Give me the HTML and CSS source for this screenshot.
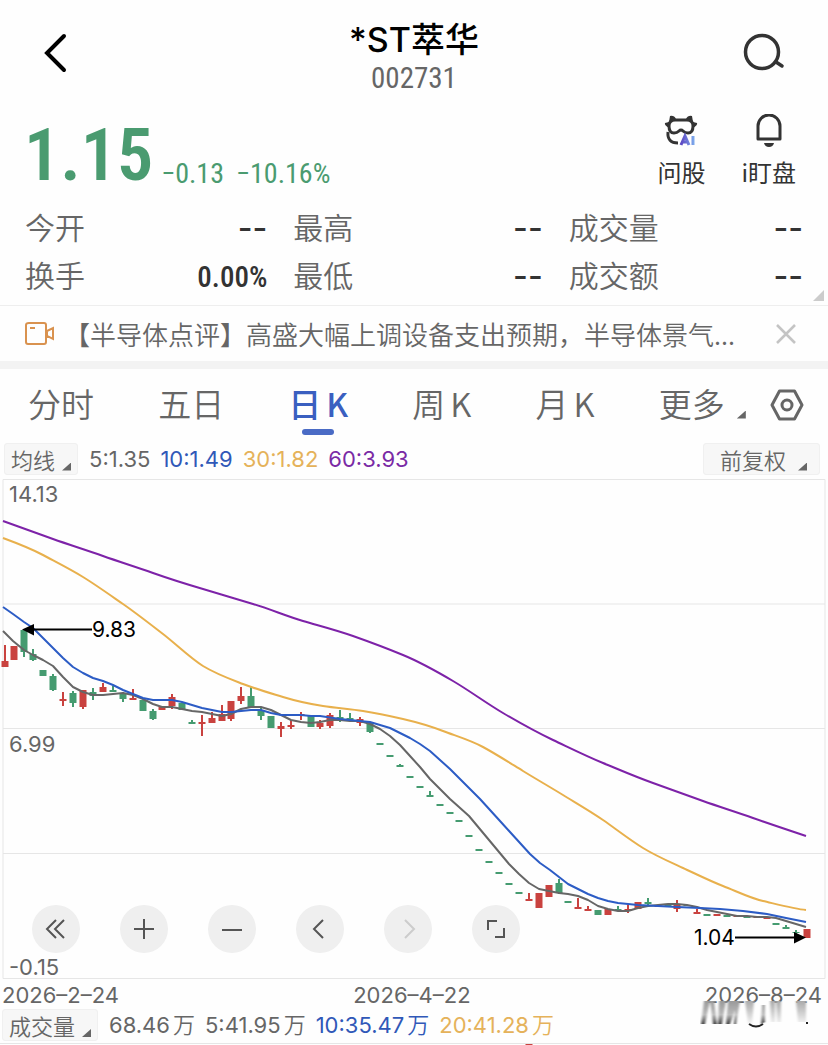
FILE: index.html
```html
<!DOCTYPE html>
<html lang="zh-CN">
<head>
  <meta charset="UTF-8">
  <meta name="viewport" content="width=device-width, initial-scale=1.0">
  <title>*ST萃华 002731</title>
  <link rel="stylesheet" href="styles.css">
</head>
<body>
  <header class="header">
    <button class="icon-btn" aria-label="返回">
      <svg width="28" height="44" viewBox="0 0 28 44"><path class="back-line" d="M22 5 L5 22 L22 39"/></svg>
    </button>
    <div class="title">
      <h1>*ST萃华</h1>
      <p class="code">002731</p>
    </div>
    <button class="icon-btn" aria-label="搜索">
      <svg width="44" height="44" viewBox="0 0 44 44"><circle class="search-line" cx="20" cy="21" r="16.5"/><path class="search-line" d="M34 31 L40 35"/></svg>
    </button>
  </header>

  <section class="quote">
    <p class="price">1.15</p>
    <p class="change"><span>−0.13</span><span>−10.16%</span></p>
    <div class="actions">
      <button class="action">
        <svg width="34" height="34" viewBox="0 0 34 34">
          <defs>
            <linearGradient id="ai" gradientUnits="userSpaceOnUse" x1="16" y1="0" x2="31" y2="0"><stop offset="0" stop-color="#5a3fc0"/><stop offset="1" stop-color="#7fb0ee"/></linearGradient>
          </defs>
          <path class="dark-fill" d="M5 8 L6 2 Q10 1 12 5 H22 Q24 1 28 2 L29 8 L33 9 Q34 11 29 14 H5 Q0 11 1 9 Z"/>
          <path class="goggles" d="M11 6 H23 Q29 6 29 12 Q29 19 24 19 Q21 19 19 17 Q17 15 15 17 Q13 19 10 19 Q5 19 5 12 Q5 6 11 6 Z"/>
          <path class="dark-line" d="M4 18 Q3 29 14 29"/>
          <path class="ai-line" d="M17 31 L21 22 L25 31 M19 28 H24 M29 22 V31"/>
        </svg>
        <span>问股</span>
      </button>
      <button class="action">
        <svg width="34" height="34" viewBox="0 0 34 34"><path class="dark-line" d="M6 25 V12 A11 11 0 0 1 28 12 V25 Z"/><path class="dark-fill" d="M12 29 H22 Q21 33 17 33 Q13 33 12 29 Z"/></svg>
        <span>i盯盘</span>
      </button>
    </div>
  </section>

  <section class="stats">
    <dl class="stat"><dt>今开</dt><dd class="empty">--</dd></dl>
    <dl class="stat"><dt>最高</dt><dd class="empty">--</dd></dl>
    <dl class="stat"><dt>成交量</dt><dd class="empty">--</dd></dl>
    <dl class="stat"><dt>换手</dt><dd>0.00%</dd></dl>
    <dl class="stat"><dt>最低</dt><dd class="empty">--</dd></dl>
    <dl class="stat"><dt>成交额</dt><dd class="empty">--</dd></dl>
    <span class="corner corner-expand"></span>
  </section>

  <section class="news">
    <svg width="30" height="24" viewBox="0 0 30 24"><path class="video-line" d="M4 1 H19 Q21 1 21 3 V20 Q21 22 19 22 H3 Q1 22 1 20 V3 Q1 1 4 1 Z M5 6 H10 M22 9 L28 6 V17 L22 14 Z"/></svg>
    <a class="news-text" href="#">【半导体点评】高盛大幅上调设备支出预期，半导体景气...</a>
    <button aria-label="关闭">
      <svg width="24" height="24" viewBox="0 0 24 24"><path class="close-line" d="M3 3 L21 21 M21 3 L3 21"/></svg>
    </button>
  </section>

  <nav class="tabs">
    <button class="tab">分时</button>
    <button class="tab">五日</button>
    <button class="tab active">日<span>K</span></button>
    <button class="tab">周<span>K</span></button>
    <button class="tab">月<span>K</span></button>
    <button class="tab more">更多<i class="corner"></i></button>
    <button aria-label="设置">
      <svg width="34" height="32" viewBox="0 0 34 32"><path class="gear-line" d="M9.500 2 H24.500 L32 16 L24.500 30 H9.500 L2 16 Z"/><circle class="gear-line" cx="17" cy="16" r="5"/></svg>
    </button>
  </nav>

  <section class="legend">
    <button class="select-btn">均线<i class="corner"></i></button>
    <p class="values">
      <span>5:1.35</span>
      <span class="blue">10:1.49</span>
      <span class="yellow">30:1.82</span>
      <span class="purple">60:3.93</span>
    </p>
    <button class="select-btn adjust">前复权<i class="corner"></i></button>
  </section>

  <section class="chart">
    <svg class="kline" viewBox="0 479 828 500">
      <!-- 网格 -->
      <path class="grid" d="M3 479.500 H825 V978.500 H3 Z M3 604 H825 M3 728.500 H825 M3 853.500 H825"/>

      <!-- K线: 影线 -->
      <path class="wick red" d="M5 645 V666 M63 692 V706 M83 690 V709 M103 683 V692 M133 689 V700 M172 694 V709 M202 715 V736 M212 712 V723 M222 705 V721 M231 701 V721 M241 687 V704 M281 722 V737 M291 720 V729 M301 712 V720 M320 720 V729 M330 713 V728 M360 717 V726 M529 893 V901 M578 898 V909 M588 906 V911 M628 905 V913 M677 900 V912 M697 909 V914"/>
      <path class="wick green" d="M24 630 V657 M33 649 V661 M53 674 V691 M73 691 V707 M93 688 V700 M113 686 V692 M123 692 V702 M153 709 V720 M192 720 V724 M251 687 V708 M261 708 V720 M340 710 V722 M350 713 V721 M370 722 V733 M400 764 V766 M430 791 V797 M559 879 V894 M618 906 V911 M648 898 V905 M786 925 V929 M796 930 V934"/>
      <!-- K线: 实体 -->
      <path class="body red" d="M5 661 V667 M14 646 V660 M63 699 V701 M83 690 V707 M103 687 V692 M133 698 V700 M162 707 V710 M172 697 V706 M202 722 V724 M212 718 V723 M222 714 V721 M231 701 V719 M241 696 V701 M281 726 V729 M291 725 V727 M301 714 V716 M320 723 V727 M330 715 V726 M360 719 V723 M529 899 V901 M539 893 V908 M549 885 V897 M578 907 V909 M588 909 V911 M608 909 V915 M628 909 V911 M638 902 V909 M658 905 V907 M677 904 V909 M697 912 V914 M717 914 V916 M737 915 V917 M757 917 V918 M767 918 V919 M807 929 V938"/>
      <path class="body green" d="M24 630 V652 M33 654 V660 M43 670 V676 M53 676 V690 M73 693 V703 M93 692 V696 M113 690 V692 M123 693 V699 M143 700 V711 M153 711 V719 M182 703 V710 M192 722 V724 M251 696 V708 M261 710 V716 M271 716 V728 M311 716 V727 M340 717 V721 M350 718 V720 M370 722 V732 M380 743 V745 M390 755 V757 M400 765 V767 M410 776 V778 M420 786 V788 M430 795 V797 M440 804 V806 M450 812 V814 M459 820 V822 M469 835 V837 M479 849 V851 M489 861 V863 M499 872 V874 M509 883 V885 M519 892 V894 M559 883 V893 M568 901 V903 M598 910 V915 M618 909 V911 M648 902 V904 M668 905 V907 M687 905 V906 M707 914 V916 M727 915 V917 M747 916 V918 M776 923 V925 M786 927 V929 M796 932 V933"/>

      <!-- 均线 -->
      <polyline class="ma ma5" points="3,631 13,641 24,650 33,655 43,660 53,666 63,677 73,687 83,692 93,695 103,695 113,694 123,693 133,695 143,699 153,704 162,707 172,707 182,709 192,711 202,712 212,714 222,716 231,714 241,709 251,707 261,707 271,710 281,715 291,720 301,722 311,723 320,722 330,720 340,720 350,721 360,721 370,724 380,729 390,736 400,745 410,756 420,767 430,779 440,789 450,799 459,807 469,816 479,828 489,840 499,852 509,864 519,874 529,883 539,889 549,891 559,893 568,894 578,896 588,900 598,906 608,909 618,911 628,911 638,908 648,906 658,905 668,904 677,904 687,905 697,907 707,910 717,912 727,914 737,916 747,916 757,917 767,917 776,918 786,921 796,924 806,927"/>
      <polyline class="ma ma10" points="3,607 13,614 24,622 33,628 43,638 53,648 63,658 73,667 83,673 93,678 103,681 113,685 123,690 133,694 143,698 153,700 162,700 172,700 182,702 192,705 202,708 212,710 222,712 231,712 241,711 251,710 261,710 271,713 281,715 291,715 301,715 311,716 320,716 340,719 360,721 370,722 380,725 390,728 400,733 410,738 420,744 430,751 440,760 450,769 460,779 470,789 480,799 490,810 500,821 510,832 520,843 530,854 540,863 550,870 559,877 568,884 578,889 588,894 598,898 608,901 618,903 628,904 638,905 658,906 677,907 700,908 720,909 743,911 767,914 786,918 806,922"/>
      <path class="ma ma30" d="M3 538 S30 548 43 555 S70 569 83 577 S110 595 123 604 S150 624 163 634 S190 658 203 666 S230 679 243 684 S270 693 283 697 S310 704 323 706 S350 709 363 711 S390 716 403 719 S430 726 443 731 S470 740 483 747 S510 763 523 771 S550 787 563 795 S590 811 603 820 S630 840 643 848 S670 862 683 868 S710 881 723 886 S750 898 763 901 S795 909 806 910"/>
      <path class="ma ma60" d="M3 521 S36 533 53 539 S86 550 103 556 S136 567 153 573 S186 584 203 589 S236 599 253 604 S286 616 303 621 S336 630 353 636 S386 648 403 655 S436 671 453 681 S486 703 503 713 S536 732 553 740 S586 756 603 763 S636 777 653 783 S686 795 703 801 S736 812 753 818 S788 830 806 836"/>

      <!-- 最高 / 最低标注 -->
      <path class="mark-line" d="M30 629.500 H92 M735 937.500 H798"/>
      <path class="mark" d="M22 629.500 L34 624 V635.500 Z M806 937.500 L794 932 V943.500 Z"/>
      <text class="mark" x="92" y="637">9.83</text>
      <text class="mark" x="694" y="945">1.04</text>

      <text class="axis" x="9" y="502">14.13</text>
      <text class="axis" x="9" y="752">6.99</text>
      <text class="axis" x="9" y="975">-0.15</text>
    </svg>
    <div class="controls">
      <button class="round" aria-label="快退"><svg width="24" height="24" viewBox="0 0 24 24"><path d="M12 3 L3 12 L12 21 M20 3 L11 12 L20 21"/></svg></button>
      <button class="round" aria-label="放大"><svg width="24" height="24" viewBox="0 0 24 24"><path d="M2 12 H22 M12 2 V22"/></svg></button>
      <button class="round" aria-label="缩小"><svg width="24" height="24" viewBox="0 0 24 24"><path d="M2 13 H22"/></svg></button>
      <button class="round" aria-label="左移"><svg width="24" height="24" viewBox="0 0 24 24"><path d="M15 3 L6 12 L15 21"/></svg></button>
      <button class="round" aria-label="右移" disabled><svg width="24" height="24" viewBox="0 0 24 24"><path d="M9 3 L18 12 L9 21"/></svg></button>
      <button class="round" aria-label="全屏"><svg width="24" height="24" viewBox="0 0 24 24"><path d="M4 13 V4 H13 M11 20 H20 V11"/></svg></button>
    </div>
  </section>

  <div class="dates">
    <time>2026–2–24</time>
    <time>2026–4–22</time>
    <time>2026–8–24</time>
  </div>

  <section class="legend volume">
    <button class="select-btn">成交量<i class="corner"></i></button>
    <p class="values">
      <span>68.46<b>万</b></span>
      <span>5:41.95<b>万</b></span>
      <span class="blue">10:35.47<b>万</b></span>
      <span class="yellow">20:41.28<b>万</b></span>
    </p>
    <svg class="smear" width="110" height="28" viewBox="0 0 110 28">
      <defs>
        <linearGradient id="fade" x1="0" y1="0" x2="0" y2="1"><stop offset="0" stop-color="#999"/><stop offset="0.600" stop-color="#bbb"/><stop offset="1" stop-color="#444"/></linearGradient>
        <linearGradient id="pale" x1="0" y1="0" x2="0" y2="1"><stop offset="0" stop-color="#aaa"/><stop offset="1" stop-color="#f4f4f4"/></linearGradient>
        <filter id="soft"><feGaussianBlur stdDeviation="0.8 0.1"/></filter>
      </defs>
      <g filter="url(#soft)">
        <path fill="url(#fade)" d="M4 1 H10 L5 24 H1 Z M10 1 H14 L17 24 H13 Z M19 1 H26 L22 24 H18 Z M28 1 H40 L36 24 H34 L35 10 L30 24 H26 Z M62 5 H65 V22 L61 24 Z"/>
        <path fill="url(#pale)" d="M45 1 H54 L52 24 H48 Z M70 1 H75 V22 H71 Z M76 1 H81 V22 H77 Z M96 1 H106 V22 H98 Z"/>
      </g>
      <path class="smear-edge" d="M49 24 Q56 29 63 24 M106 23 H108"/>
    </svg>
  </section>

  <svg class="bars" viewBox="0 0 828 20"><path class="body red" d="M529 0 V20"/></svg>
</body>
</html>
```

FILE: styles.css
```css
* {
  box-sizing: border-box;
}

body {
  margin: 0;
  background: #fefefe;
  color: #666;
  font-family: "Noto Sans CJK SC", sans-serif;
  font-weight: 350;
  overflow: hidden;
}

h1, p, dl, dd {
  margin: 0;
}

button {
  padding: 0;
  border: none;
  background: none;
  color: inherit;
  font: inherit;
}

svg {
  display: block;
  fill: none;
}

/* 顶部标题 */
.header {
  display: flex;
  align-items: center;
  justify-content: space-between;
  height: 106px;
  padding: 0 42px;
}

.icon-btn {
  width: 44px;
}

.title {
  padding-top: 10px;
  text-align: center;
}

.title h1 {
  color: #000;
  font-family: Inter, "Noto Sans CJK SC", sans-serif;
  font-size: 34px;
  font-weight: 500;
  line-height: 40px;
}

.code {
  font-family: "Roboto Condensed", Roboto, sans-serif;
  font-size: 29px;
  font-weight: 400;
  line-height: 36px;
}

.back-line {
  stroke: #000;
  stroke-width: 4;
  stroke-linecap: round;
}

.search-line {
  stroke: #333;
  stroke-width: 3.5;
  stroke-linecap: round;
}

/* 价格 */
.quote {
  display: flex;
  align-items: flex-end;
  height: 96px;
  padding: 0 32px 12px 24px;
  color: #4a9b70;
  font-family: "Roboto Condensed", Roboto, sans-serif;
  font-weight: 400;
}

.price {
  font-size: 72px;
  font-weight: 600;
  line-height: 68px;
}

.change {
  display: flex;
  gap: 12px;
  margin-left: 8px;
  font-size: 28px;
  line-height: 32px;
}

.actions {
  display: flex;
  gap: 36px;
  margin-left: auto;
}

.action {
  display: flex;
  flex-direction: column;
  align-items: center;
  gap: 6px;
  color: #333;
  font-family: "Noto Sans CJK SC", sans-serif;
  font-size: 24px;
  line-height: 36px;
}

.dark-line {
  stroke: #333;
  stroke-width: 3;
  stroke-linejoin: round;
}

.dark-fill {
  fill: #333;
}

.goggles {
  fill: #fefefe;
  stroke: #333;
  stroke-width: 3;
}

.ai-line {
  stroke: url(#ai);
  stroke-width: 3;
}

/* 行情数据 */
.stats {
  position: relative;
  display: grid;
  grid-template-columns: 242fr 249fr 234fr;
  column-gap: 26px;
  padding: 0 25px 7px;
  border-bottom: 1px solid #eee;
}

.stat {
  display: flex;
  align-items: baseline;
  justify-content: space-between;
  height: 48px;
  font-size: 30px;
  line-height: 48px;
}

.stat dd {
  color: #333;
  font-family: "Roboto Condensed", Roboto, sans-serif;
  font-size: 29px;
  font-weight: 500;
}

.stat .empty {
  font-family: Inter, sans-serif;
  font-size: 32px;
}

.corner {
  width: 9px;
  height: 8px;
  background: #666;
  clip-path: polygon(100% 0, 100% 100%, 0 100%);
}

.corner-expand {
  position: absolute;
  right: 4px;
  bottom: 4px;
  width: 11px;
  height: 11px;
  background: #ccc;
}

/* 资讯 */
.news {
  display: flex;
  align-items: center;
  height: 63px;
  padding: 0 30px 0 25px;
  border-bottom: 8px solid #f3f3f3;
}

.news-text {
  flex: 1;
  margin-left: 9px;
  color: #666;
  font-size: 26px;
  line-height: 40px;
  text-decoration: none;
  white-space: nowrap;
}

.video-line {
  stroke: #d9924f;
  stroke-width: 2;
}

.close-line {
  stroke: #c4c4c4;
  stroke-width: 2.5;
}

/* 周期切换 */
.tabs {
  display: flex;
  align-items: center;
  justify-content: space-between;
  height: 71px;
  padding: 0 24px 0 28px;
}

.tab {
  display: flex;
  gap: 5px;
  height: 100%;
  align-items: center;
  padding-bottom: 4px;
  font-size: 33px;
}

.active {
  position: relative;
  color: #3a5fc0;
  font-weight: 500;
}

.active::after {
  content: "";
  position: absolute;
  left: 50%;
  bottom: 5px;
  width: 32px;
  height: 6px;
  margin-left: -16px;
  border-radius: 3px;
  background: #4a6bc5;
}

.more {
  gap: 12px;
  margin-right: -40px;
}

.more .corner {
  margin-top: 24px;
}

.gear-line {
  stroke: #666;
  stroke-width: 3;
  stroke-linejoin: round;
}

/* 指标栏 */
.legend {
  display: flex;
  align-items: center;
  height: 39px;
  padding: 0 8px 2px 4px;
  font-size: 22px;
  line-height: 30px;
}

.select-btn {
  display: flex;
  align-items: center;
  gap: 7px;
  height: 32px;
  padding: 0 6px;
  border: 1px solid #f0f0f0;
  border-radius: 3px;
  background: #f7f7f7;
}

.select-btn .corner {
  margin-top: 16px;
}

.adjust {
  gap: 12px;
  margin-left: auto;
  padding: 0 12px 0 16px;
}

.values {
  display: flex;
  gap: 10px;
  margin-left: 11px;
  font-family: Inter, "Noto Sans CJK SC", sans-serif;
  font-weight: 400;
}

.values b {
  margin-left: 3px;
  font-weight: 350;
}

.blue {
  color: #3058b8;
}

.yellow {
  color: #e5b25a;
}

.purple {
  color: #7a2aa5;
}

/* K线图 */
.chart {
  position: relative;
}

.kline {
  width: 100%;
  height: auto;
}

.grid {
  stroke: #e6e6e6;
}

.wick {
  stroke-width: 2;
}

.body {
  stroke-width: 7;
}

.red {
  stroke: #c9423f;
}

.green {
  stroke: #459b70;
}

.ma {
  stroke-width: 2;
  stroke-linejoin: round;
}

.ma5 {
  stroke: #666;
}

.ma10 {
  stroke: #2c5cc5;
}

.ma30 {
  stroke: #e8b04c;
}

.ma60 {
  stroke: #7d22a8;
}

.mark-line {
  stroke: #000;
  stroke-width: 2;
}

.mark, .axis {
  font-family: Inter, sans-serif;
  font-size: 21px;
  font-weight: 400;
  fill: #000;
}

.axis {
  font-size: 22px;
  fill: #666;
}

.controls {
  position: absolute;
  left: 32px;
  bottom: 26px;
  display: flex;
  gap: 40px;
}

.round {
  display: flex;
  align-items: center;
  justify-content: center;
  width: 48px;
  height: 48px;
  border-radius: 50%;
  background: #efefef;
}

.round path {
  stroke: #555;
  stroke-width: 2;
}

.round:disabled path {
  stroke: #ccc;
}

/* 日期 */
.dates {
  display: flex;
  justify-content: space-between;
  padding: 2px 6px 0 2px;
  font-family: Inter, sans-serif;
  font-size: 22px;
  font-weight: 400;
  line-height: 28px;
}

/* 成交量 */
.volume {
  position: relative;
  height: 35px;
  padding-left: 2px;
  border-bottom: 1px solid #e6e6e6;
}

.smear {
  position: absolute;
  right: 18px;
  top: -9px;
}

.smear-edge {
  stroke: #222;
  stroke-width: 2;
}

.bars {
  width: 100%;
}
```
